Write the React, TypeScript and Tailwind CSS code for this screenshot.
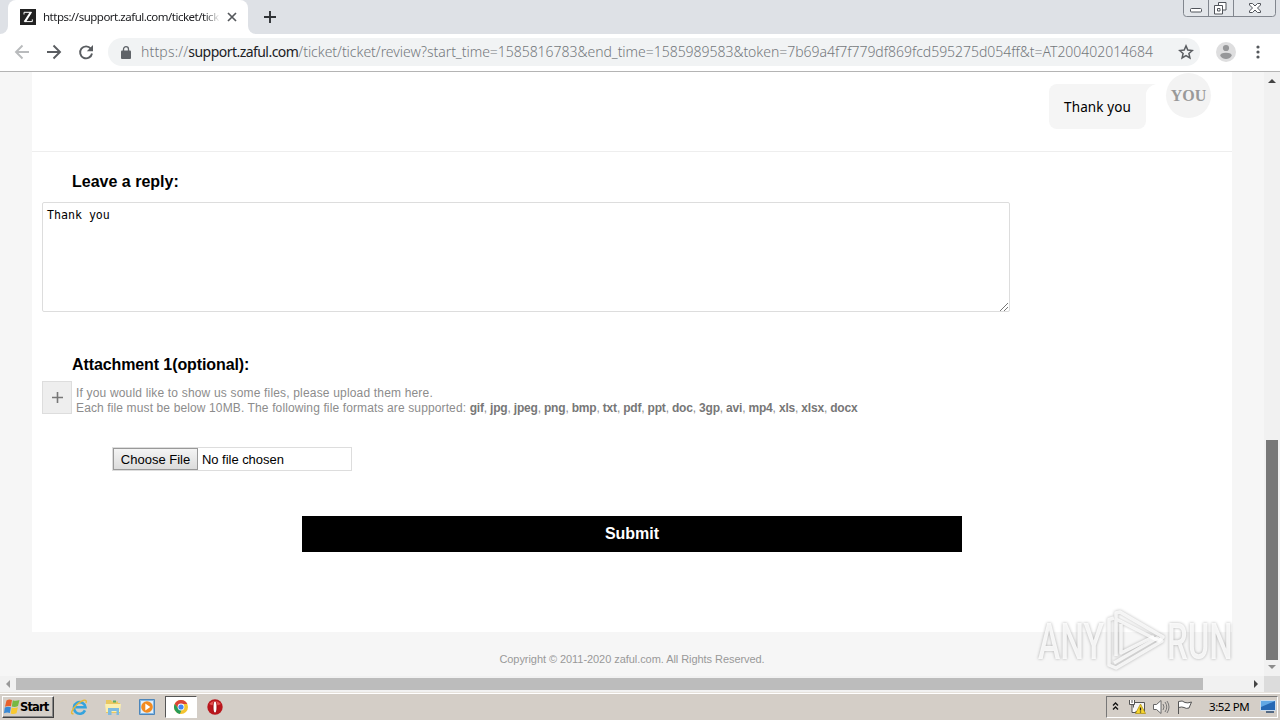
import type { ReactNode } from "react";
import { clsx } from "clsx";

const FORMATS = [
  "gif", "jpg", "jpeg", "png", "bmp", "txt", "pdf", "ppt",
  "doc", "3gp", "avi", "mp4", "xls", "xlsx", "docx",
];

const UI_FONT = "font-['Noto_Sans',sans-serif]";
const PAGE_FONT = "font-['Liberation_Sans',Arial,sans-serif]";

function TabStrip() {
  return (
    <div className="relative flex h-[34px] shrink-0 bg-[#dee1e6]">
      <div className="flex w-2 items-end bg-white">
        <div className="h-full w-2 rounded-br-lg bg-[#dee1e6]" />
      </div>
      <div className="flex w-60 items-center rounded-t-lg bg-white pl-3">
        <svg width="16" height="16" viewBox="0 0 16 16" className="shrink-0">
          <path fill="#222" d="M0 0h16v16H0z" />
          <path fill="none" stroke="#fff" d="M4 5.5V3.3h7.5L4.3 12.6h8v-2.2" />
          <path stroke="#fff" strokeWidth="2" d="M10.8 3.3 5 12.6" />
        </svg>
        <span className="ml-[7px] w-[177px] whitespace-nowrap text-[11.5px] tracking-[-0.5px] text-[#202124] [mask-image:linear-gradient(to_right,#000_91%,transparent)]">
          https://support.zaful.com/ticket/tick
        </span>
        <svg width="10" height="10" viewBox="0 0 10 10" className="ml-[7px] shrink-0">
          <path stroke="#55585c" strokeWidth="1.7" d="m1 1 8 8M9 1 1 9" />
        </svg>
      </div>
      <div className="w-2 bg-white">
        <div className="h-full w-2 rounded-bl-lg bg-[#dee1e6]" />
      </div>
      <svg width="12" height="12" viewBox="0 0 12 12" className="ml-2 mt-[11px]">
        <path stroke="#2f3236" strokeWidth="1.9" d="M6 0v12M0 6h12" />
      </svg>
      <svg width="94" height="18" viewBox="0 0 94 18" className="absolute right-[3px] top-0">
        <path fill="#e3e6ea" stroke="#81868e" d="M.5-1v14.500q0 3 3 3h86q3 0 3-3V-1M25.500 0v16.500M50.500 0v16.500" />
        <g fill="#fff" stroke="#50545b">
          <rect x="7.500" y="8.500" width="11" height="3.500" rx="1" />
          <path d="M35.500 2.500h7.500v7.500h-7.500z" />
          <path d="M31.500 5.500h8v8.500h-8z" />
          <path d="M34.500 8.500h2.500v2.500h-2.500z" />
          <path d="M66.500 3.500h3l2.500 2.500 2.500-2.500h3v1.500L74.500 8l3 3v1.500h-3L72 10l-2.500 2.500h-3V11l3-3-3-3z" />
        </g>
      </svg>
    </div>
  );
}

function Toolbar() {
  return (
    <div className="flex h-[38px] shrink-0 items-center border-b border-[#b4b4b4] bg-white pb-px">
      <svg width="108" height="36" viewBox="0 0 108 36" fill="none" strokeWidth="1.9" className="shrink-0">
        <path stroke="#b9bbbd" d="M29 18H16.500M22.500 11.500 16 18l6.500 6.500" />
        <path stroke="#5a5d61" d="M47 18h12.500M53.500 11.500 60 18l-6.500 6.500" />
        <path stroke="#5a5d61" d="M90.800 14.600A6 6 0 1 0 92 19.500" />
        <path fill="#5a5d61" d="M93 11v6.200h-6.200z" />
      </svg>
      <div className="flex h-7 w-[1092px] shrink-0 items-center rounded-full bg-[#f1f3f4] pl-[13px]">
        <svg width="10" height="13" viewBox="0 0 10 13" className="shrink-0">
          <path fill="#5f6368" d="M1 4.500h8q1 0 1 1V12q0 1-1 1H1q-1 0-1-1V5.500q0-1 1-1z" />
          <path fill="none" stroke="#5f6368" strokeWidth="1.300" d="M2.500 5V3.200a2.500 2.500 0 0 1 5 0V5" />
        </svg>
        <span className="ml-[10px] w-[1014px] whitespace-nowrap pb-0.5 text-[14px] font-light tracking-[-0.030px] text-[#74787c]">
          <span className="tracking-[0.17px]">https://</span>
          <span className="font-normal tracking-[-0.54px] text-[#202124]">support.zaful.com</span>
          /ticket/ticket/review?start_time=1585816783&amp;end_time=1585989583&amp;token=7b69a4f7f779df869fcd595275d054ff&amp;t=AT200402014684
        </span>
        <svg width="16" height="16" viewBox="0 0 16 16" className="ml-[23px] shrink-0">
          <path fill="none" stroke="#5a5d61" strokeWidth="1.500" d="m8 1.900 1.800 4.200 4.500.4-3.400 3 1 4.400L8 11.600l-3.900 2.300 1-4.400-3.400-3 4.500-.4z" />
        </svg>
      </div>
      <svg width="20" height="20" viewBox="0 0 20 20" className="ml-4 shrink-0">
        <circle cx="10" cy="10" r="10" fill="#dededf" />
        <circle cx="10" cy="6" r="3.100" fill="#969799" />
        <path fill="#969799" d="M4.200 13.800q0-3 5.800-3t5.800 3Q13.500 17 10 17t-5.800-3.200z" />
      </svg>
      <svg width="4" height="14" viewBox="0 0 4 14" fill="#55585c" className="ml-5">
        <circle cx="2" cy="2" r="1.600" />
        <circle cx="2" cy="7" r="1.600" />
        <circle cx="2" cy="12" r="1.600" />
      </svg>
    </div>
  );
}

function SentMessage() {
  return (
    <div className="flex h-20 items-start justify-end border-b border-[#eee] pr-[21px]">
      <div className="relative mt-3 flex h-[45px] w-[97px] items-center justify-center rounded-lg rounded-tr-none bg-[#f5f5f5] pt-0.5 text-black">
        <span className={clsx(UI_FONT, "text-[13.5px] tracking-[0.1px]")}>Thank you</span>
        <svg width="10" height="10" viewBox="0 0 10 10" className="absolute left-full top-0">
          <path fill="#f5f5f5" d="M0 0h10Q2 2 0 9z" />
        </svg>
      </div>
      <div className="ml-5 mt-px flex size-[45px] items-center justify-center rounded-full bg-[#f3f3f3] font-['Liberation_Serif',serif] text-[16px] font-bold text-[#999]">
        YOU
      </div>
    </div>
  );
}

function ReplyForm() {
  return (
    <form className="flex flex-col">
      <h2 className="ml-10 mt-5 text-[16px] font-bold leading-5 text-black">Leave a reply:</h2>
      <div className="relative ml-[10px] mt-[10px] h-[110px] w-[968px] rounded-xs border border-[#ddd] px-1 pt-1 font-['DejaVu_Sans_Mono',monospace] text-[11.600px] leading-4 text-black">
        Thank you
        <svg width="8" height="8" viewBox="0 0 8 8" className="absolute bottom-0 right-px">
          <path stroke="#777" d="M0 8 8 0M4 8l4-4" />
        </svg>
      </div>
      <h2 className="ml-10 mt-[43px] text-[16px] font-bold leading-5 tracking-[-0.1px] text-black">Attachment 1(optional):</h2>
      <div className="ml-[10px] mt-1.5 flex">
        <div className="flex h-[33px] w-[30px] items-center justify-center border border-[#ddd] bg-[#eee]">
          <svg width="11" height="11" viewBox="0 0 11 11">
            <path stroke="#777" strokeWidth="1.600" d="M5.500 0v11M0 5.500h11" />
          </svg>
        </div>
        <div className="ml-1 mt-[5px] h-7 whitespace-nowrap text-[12px] leading-[15px] text-[#8c8c8c]">
          <p className="tracking-[0.175px]">If you would like to show us some files, please upload them here.</p>
          <p className="tracking-[-0.19px]">
            <span className="tracking-[0.125px]">Each file must be below 10MB. The following file formats are supported: </span>
            {FORMATS.map((format, i) => (
              <span key={format}>
                {i > 0 && ", "}
                <b className="text-[#777]">{format}</b>
              </span>
            ))}
          </p>
        </div>
      </div>
      <div className="ml-20 mt-[33px] flex h-6 w-60 items-center border border-[#ddd] text-[13px] text-black">
        <span className="flex h-[22px] w-[85px] shrink-0 items-center justify-center border border-[#999] bg-linear-to-b from-[#f4f4f4] to-[#dcdcdc] pt-0.5">
          Choose File
        </span>
        <span className="ml-1 pt-0.5 tracking-[-0.04px]">No file chosen</span>
      </div>
      <button type="button" className="ml-[270px] mt-[45px] h-9 w-[660px] bg-black text-[16px] font-bold text-white">
        Submit
      </button>
    </form>
  );
}

function VerticalScrollbar() {
  return (
    <div className="flex w-4 shrink-0 flex-col items-center bg-[#f1f1f1]">
      <svg width="8" height="4" viewBox="0 0 8 4" className="mt-[7px]">
        <path fill="#444" d="M0 4h8L4 0z" />
      </svg>
      <div className="mt-[357px] h-[220px] w-3 bg-[#787878]" />
      <svg width="8" height="4" viewBox="0 0 8 4" className="mt-[5px]">
        <path fill="#8c8c8c" d="M0 0h8L4 4z" />
      </svg>
    </div>
  );
}

function HorizontalScrollbar() {
  return (
    <div className="flex h-4 shrink-0 items-center bg-[#f1f1f1]">
      <svg width="4" height="8" viewBox="0 0 4 8" className="ml-1.5">
        <path fill="#999" d="M4 0v8L0 4z" />
      </svg>
      <div className="ml-1.5 h-3 w-[1187px] bg-[#bcbcbc]" />
      <svg width="4" height="8" viewBox="0 0 4 8" className="ml-[51px]">
        <path fill="#444" d="M0 0v8l4-4z" />
      </svg>
      <div className="ml-auto h-full w-4 bg-[#dcdcdc]" />
    </div>
  );
}

function LaunchIcon({ active, children }: { active?: boolean; children: ReactNode }) {
  return (
    <span
      className={clsx(
        "flex h-[22px] w-8 items-center justify-center",
        active && "border border-b-white border-l-[#555] border-r-white border-t-[#555] bg-white",
      )}
    >
      <svg width="18" height="18" viewBox="0 0 18 18">{children}</svg>
    </span>
  );
}

function Taskbar() {
  return (
    <div className="flex h-7 shrink-0 items-center border-t border-[#e6e2dc] bg-[#d4cec7] pt-px shadow-[inset_0_1px_0_#fff]">
      <div className="ml-0.5 flex h-[22px] w-[52px] items-center border border-b-[#404040] border-l-white border-r-[#404040] border-t-white bg-[#d4cec7] shadow-[inset_-1px_-1px_0_#888]">
        <svg width="16" height="16" viewBox="0 0 16 16" className="ml-px shrink-0">
          <path fill="#e8612c" d="M2.500 1.500Q5-.2 8 1L7 7.300Q4 6.300 1 7.700z" />
          <path fill="#77b843" d="M8.800 1.300q3 1.200 6.700-.3L14 7Q10.800 8.500 7.800 7.500z" />
          <path fill="#3989d5" d="M.8 8.600q3-1.500 6.100-.4L5.900 14Q3 13 0 14.300z" />
          <path fill="#f8c82f" d="M7.700 8.500q3 1.200 6.200-.2l-1.400 6q-3 1.500-5.800.2z" />
        </svg>
        <span className="pt-px font-['DejaVu_Sans',sans-serif] text-[11.500px] font-bold tracking-[-0.850px] text-black">Start</span>
      </div>
      <div className="ml-[9px] flex gap-0.5">
        <LaunchIcon>
          <path fill="none" stroke="#35a3dd" strokeWidth="2.600" d="M15 12.400A5.800 5.800 0 1 1 15.500 9.300H5.500" />
          <path fill="none" stroke="#e8b936" strokeWidth="1.400" d="M3.500 15.500C0 17 1.500 11.500 7 6.500S17.500.5 16 5" />
        </LaunchIcon>
        <LaunchIcon>
          <path fill="#e9c860" d="M2 2h5l1 1.500h6V5h2v10H2z" />
          <path fill="#fbefae" d="M1 6h16l-1 8H2z" />
          <path fill="#7dbbe0" d="M4 10h11v7h-2.500v-4h-5v4H4z" />
          <path fill="#58ad65" d="M9 2.500h3v2H9z" />
        </LaunchIcon>
        <LaunchIcon>
          <path fill="#84b9e6" stroke="#4d86ba" d="M1.500 1.500h15v15h-15z" />
          <path fill="#e2effa" d="M3 3h12v12H3z" />
          <circle cx="9" cy="9" r="5.800" fill="#f28b20" />
          <path fill="#fff" d="m7.300 5.500 5 3.500-5 3.500z" />
        </LaunchIcon>
        <LaunchIcon active>
          <circle cx="9" cy="9" r="7" fill="#f4c430" />
          <path fill="#db4437" d="M2.700 6A7 7 0 0 1 15.300 6H9L6.400 10.500z" />
          <path fill="#279b58" d="M2.700 6 6.400 10.500 9.500 12l-1.600 3.900A7 7 0 0 1 2.700 6z" />
          <circle cx="9" cy="9" r="3.400" fill="#fff" />
          <circle cx="9" cy="9" r="2.600" fill="#4285f4" />
        </LaunchIcon>
        <LaunchIcon>
          <circle cx="9" cy="9" r="7.700" fill="#b9161c" />
          <path fill="#e65353" d="M3 6q6-6 12 0-6 3-12 0z" />
          <ellipse cx="9" cy="9" rx="2.500" ry="6" fill="#9c0d13" />
          <ellipse cx="9" cy="9" rx="1.500" ry="5.500" fill="#fff" />
        </LaunchIcon>
      </div>
      <div className="ml-auto mr-0.5 flex h-[22px] w-[172px] items-center border border-b-white border-l-[#777] border-r-white border-t-[#777]">
        <svg width="88" height="20" viewBox="0 0 88 20" fill="none" className="shrink-0">
          <path stroke="#111" strokeWidth="1.300" d="m6 8.500 2.500-2.500L11 8.500M6 12.500l2.500-2.500 2.500 2.500" />
          <path fill="#f5f5f5" stroke="#555" d="M26.500 5.500h11v9h-11z" />
          <path fill="#fff" stroke="#555" d="M22.500 3v4.500h5V3M25 3v3M25 7.500v8h4" />
          <path fill="#f7d52e" stroke="#aa8c0c" strokeWidth=".7" d="m33.500 7 5 9.500h-10z" />
          <path stroke="#222" strokeWidth="1.300" d="M33.500 10.500v3M33.500 14.500v1" />
          <path fill="#fff" stroke="#666" d="M46.500 7.500h3L54 3.500v13l-4.500-4h-3z" />
          <path stroke="#777" d="M56 7q2 3 0 6M58 5q3.500 5 0 10M60 4q4 6 0 12" />
          <path fill="#fff" stroke="#555" d="M71.500 17V4.500q4-1.500 6.500 1 2.500 1 6.500-.5l-2.500 6q-3 1-5-.5-2-1-5.500 0" />
        </svg>
        <span className="ml-[14px] whitespace-nowrap text-[11.500px] tracking-[-0.400px] text-black">3:52 PM</span>
        <svg width="16" height="14" viewBox="0 0 16 14" className="ml-auto mr-px">
          <path fill="#2668b4" stroke="#cbdced" d="M.5.500h15v10H.5z" />
          <path fill="#62a8e5" d="M1 1h14L1 7z" />
          <path fill="#536984" d="M6 11h8v2H6z" />
        </svg>
      </div>
    </div>
  );
}

function Watermark() {
  return (
    <svg
      width="204"
      height="66"
      viewBox="0 0 204 66"
      className="absolute left-[1034px] top-[608px] [filter:drop-shadow(0_0_1.5px_rgba(0,0,0,0.35))]"
    >
      <g fill="#fff" fillOpacity=".85" fontFamily="Roboto, sans-serif" fontSize="50" fontWeight="500">
        <text transform="translate(4 51) scale(.67 1)">ANY</text>
        <text transform="translate(133 51) scale(.66 1)">RUN</text>
      </g>
      <g fill="none" stroke="#fff" strokeOpacity=".8" strokeWidth="3.500" strokeLinejoin="round">
        <path d="M87 16v29l33-16.500" />
        <path d="M80 10l-5 1.500V57l7 3 46-27-5-3L80 55" />
        <path d="M82 48V5l4-1 43 25-4 4-43-22" />
      </g>
    </svg>
  );
}

export default function App() {
  return (
    <div className={clsx("relative flex h-[720px] w-[1280px] flex-col overflow-hidden", UI_FONT)}>
      <TabStrip />
      <Toolbar />
      <div className="flex h-[604px] shrink-0">
        <main className={clsx("flex flex-1 flex-col bg-[#f6f6f6] px-8", PAGE_FONT)}>
          <div className="h-[560px] bg-white">
            <SentMessage />
            <ReplyForm />
          </div>
          <footer className="mt-[19px] text-center text-[11px] leading-4 tracking-[-0.060px] text-[#999]">
            Copyright © 2011-2020 zaful.com. All Rights Reserved.
          </footer>
        </main>
        <VerticalScrollbar />
      </div>
      <HorizontalScrollbar />
      <Taskbar />
      <Watermark />
    </div>
  );
}
